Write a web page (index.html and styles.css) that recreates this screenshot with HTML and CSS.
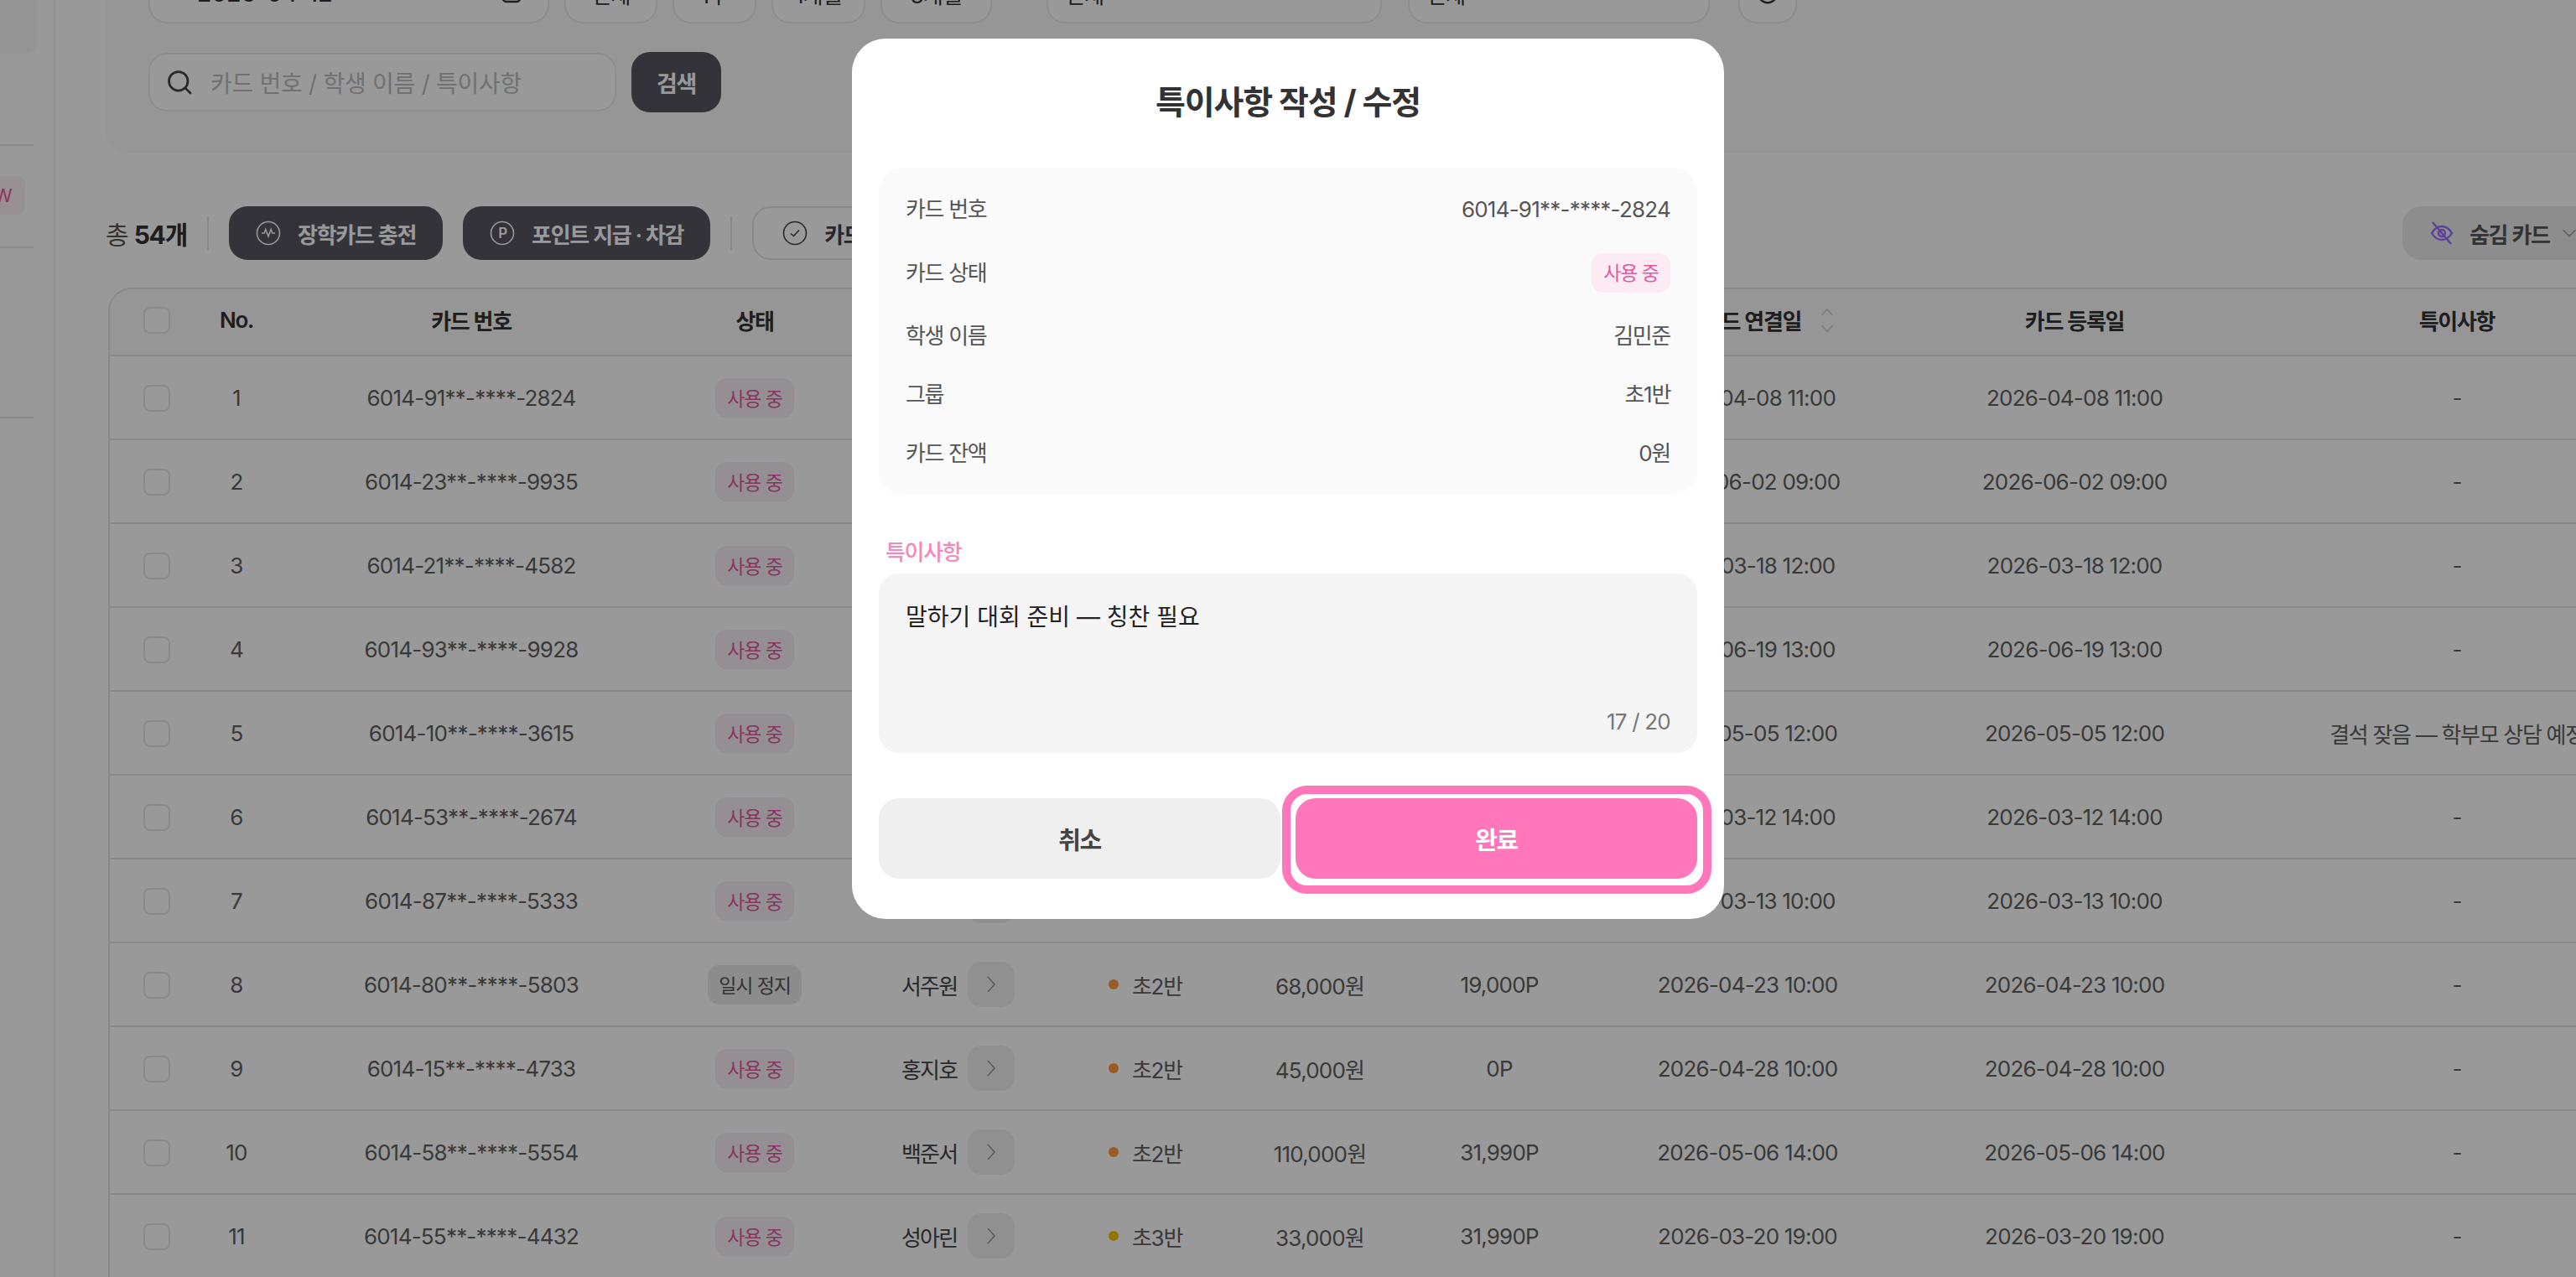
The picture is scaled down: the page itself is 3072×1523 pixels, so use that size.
FILE: index.html
```html
<!DOCTYPE html>
<html lang="ko">
<head>
<meta charset="utf-8">
<title>카드 관리</title>
<link rel="stylesheet" href="styles.css">
</head>
<body>
<div class="app">
  <aside class="sidebar">
    <div class="side-active"></div>
    <div class="side-line l1"></div>
    <div class="side-new">NEW</div>
    <div class="side-line l2"></div>
    <div class="side-line l3"></div>
  </aside>
  <main class="main">
    <section class="filters">
      <div class="filter-row">
        <div class="field date"><span>2026-04-12</span>
          <svg class="ic" viewBox="0 0 24 24"><rect x="4" y="5" width="16" height="15" rx="3"/><path d="M4 10h16M8 3v4M16 3v4"/></svg>
        </div>
        <div class="field chip w110">전체</div>
        <div class="field chip w100">1주</div>
        <div class="field chip w116">1개월</div>
        <div class="field chip w133">3개월</div>
        <div class="field select w400 push">전체</div>
        <div class="field select w360">전체</div>
        <div class="field chip w70"><svg class="ic" viewBox="0 0 24 24"><circle cx="12" cy="12" r="9"/></svg></div>
      </div>
      <div class="search-row">
        <div class="field search">
          <svg class="search-ic" viewBox="0 0 24 24"><circle cx="11" cy="11" r="9"/><path d="M17.5 17.5 23 23"/></svg>
          <span>카드 번호 / 학생 이름 / 특이사항</span>
        </div>
        <button class="btn-dark search-btn">검색</button>
      </div>
    </section>

    <section class="toolbar">
      <div class="total">총 <b>54개</b></div>
      <i class="vline"></i>
      <button class="btn-dark action"><svg class="ic-lg" viewBox="0 0 30 30"><circle cx="15" cy="15" r="13.5"/><path d="M7 15h3.200l1.600-4.500 3.200 8.500 3.200-8.500 1.600 4.500h3.200"/></svg>장학카드 충전</button>
      <button class="btn-dark action"><svg class="ic-lg" viewBox="0 0 30 30"><circle cx="15" cy="15" r="13.5"/><text x="15" y="21" text-anchor="middle" class="ic-text">P</text></svg>포인트 지급 · 차감</button>
      <i class="vline"></i>
      <button class="btn-line"><svg class="ic-lg" viewBox="0 0 30 30"><circle cx="15" cy="15" r="13.5"/><path d="m10 15.500 3.500 3 6.500-7"/></svg>카드 일시 정지</button>
      <button class="btn-hidden"><svg class="eye" viewBox="0 0 30 30"><path d="M3 15c3-5 7.500-8 12-8s9 3 12 8c-3 5-7.500 8-12 8s-9-3-12-8Z"/><circle cx="15" cy="15" r="4"/><path d="M4 2l22 26"/></svg>숨김 카드<svg class="chev" viewBox="0 0 24 24"><path d="m4 8 8 8 8-8"/></svg></button>
    </section>

    <div class="table-wrap">
      <table class="cards">
        <colgroup>
          <col class="c-check"><col class="c-no"><col class="c-card"><col class="c-status"><col class="c-name"><col class="c-group"><col class="c-bal"><col class="c-pt"><col class="c-link"><col class="c-reg"><col class="c-note">
        </colgroup>
        <thead>
          <tr>
            <th><span class="check"></span></th><th>No.</th><th>카드 번호</th><th>상태</th><th>학생 이름</th><th>그룹</th><th>카드 잔액</th><th>포인트</th>
            <th><span class="sort-wrap">카드 연결일<svg class="sort" viewBox="0 0 20 36"><path d="m3 11 7-8 7 8M3 25l7 8 7-8"/></svg></span></th>
            <th>카드 등록일</th><th>특이사항</th>
          </tr>
        </thead>
        <tbody>
          <tr><td><span class="check"></span></td><td>1</td><td>6014-91**-****-2824</td><td><span class="badge on">사용 중</span></td><td><div class="name">김민준<span class="go"><svg viewBox="0 0 12 24"><path d="m2 3 8 9-8 9"/></svg></span></div></td><td><div class="grp"><i class="dot orange"></i>초1반</div></td><td>0원</td><td>0P</td><td>2026-04-08 11:00</td><td>2026-04-08 11:00</td><td class="mute">-</td></tr>
          <tr><td><span class="check"></span></td><td>2</td><td>6014-23**-****-9935</td><td><span class="badge on">사용 중</span></td><td><div class="name">이서연<span class="go"><svg viewBox="0 0 12 24"><path d="m2 3 8 9-8 9"/></svg></span></div></td><td><div class="grp"><i class="dot orange"></i>초1반</div></td><td>25,000원</td><td>0P</td><td>2026-06-02 09:00</td><td>2026-06-02 09:00</td><td class="mute">-</td></tr>
          <tr><td><span class="check"></span></td><td>3</td><td>6014-21**-****-4582</td><td><span class="badge on">사용 중</span></td><td><div class="name">박지우<span class="go"><svg viewBox="0 0 12 24"><path d="m2 3 8 9-8 9"/></svg></span></div></td><td><div class="grp"><i class="dot orange"></i>초1반</div></td><td>50,000원</td><td>1,000P</td><td>2026-03-18 12:00</td><td>2026-03-18 12:00</td><td class="mute">-</td></tr>
          <tr><td><span class="check"></span></td><td>4</td><td>6014-93**-****-9928</td><td><span class="badge on">사용 중</span></td><td><div class="name">최하윤<span class="go"><svg viewBox="0 0 12 24"><path d="m2 3 8 9-8 9"/></svg></span></div></td><td><div class="grp"><i class="dot orange"></i>초1반</div></td><td>12,000원</td><td>0P</td><td>2026-06-19 13:00</td><td>2026-06-19 13:00</td><td class="mute">-</td></tr>
          <tr><td><span class="check"></span></td><td>5</td><td>6014-10**-****-3615</td><td><span class="badge on">사용 중</span></td><td><div class="name">정도윤<span class="go"><svg viewBox="0 0 12 24"><path d="m2 3 8 9-8 9"/></svg></span></div></td><td><div class="grp"><i class="dot orange"></i>초1반</div></td><td>30,000원</td><td>500P</td><td>2026-05-05 12:00</td><td>2026-05-05 12:00</td><td class="note">결석 잦음 — 학부모 상담 예정</td></tr>
          <tr><td><span class="check"></span></td><td>6</td><td>6014-53**-****-2674</td><td><span class="badge on">사용 중</span></td><td><div class="name">강시우<span class="go"><svg viewBox="0 0 12 24"><path d="m2 3 8 9-8 9"/></svg></span></div></td><td><div class="grp"><i class="dot orange"></i>초1반</div></td><td>8,000원</td><td>0P</td><td>2026-03-12 14:00</td><td>2026-03-12 14:00</td><td class="mute">-</td></tr>
          <tr><td><span class="check"></span></td><td>7</td><td>6014-87**-****-5333</td><td><span class="badge on">사용 중</span></td><td><div class="name">윤지아<span class="go"><svg viewBox="0 0 12 24"><path d="m2 3 8 9-8 9"/></svg></span></div></td><td><div class="grp"><i class="dot orange"></i>초2반</div></td><td>40,000원</td><td>0P</td><td>2026-03-13 10:00</td><td>2026-03-13 10:00</td><td class="mute">-</td></tr>
          <tr><td><span class="check"></span></td><td>8</td><td>6014-80**-****-5803</td><td><span class="badge off">일시 정지</span></td><td><div class="name">서주원<span class="go"><svg viewBox="0 0 12 24"><path d="m2 3 8 9-8 9"/></svg></span></div></td><td><div class="grp"><i class="dot orange"></i>초2반</div></td><td>68,000원</td><td>19,000P</td><td>2026-04-23 10:00</td><td>2026-04-23 10:00</td><td class="mute">-</td></tr>
          <tr><td><span class="check"></span></td><td>9</td><td>6014-15**-****-4733</td><td><span class="badge on">사용 중</span></td><td><div class="name">홍지호<span class="go"><svg viewBox="0 0 12 24"><path d="m2 3 8 9-8 9"/></svg></span></div></td><td><div class="grp"><i class="dot orange"></i>초2반</div></td><td>45,000원</td><td>0P</td><td>2026-04-28 10:00</td><td>2026-04-28 10:00</td><td class="mute">-</td></tr>
          <tr><td><span class="check"></span></td><td>10</td><td>6014-58**-****-5554</td><td><span class="badge on">사용 중</span></td><td><div class="name">백준서<span class="go"><svg viewBox="0 0 12 24"><path d="m2 3 8 9-8 9"/></svg></span></div></td><td><div class="grp"><i class="dot orange"></i>초2반</div></td><td>110,000원</td><td>31,990P</td><td>2026-05-06 14:00</td><td>2026-05-06 14:00</td><td class="mute">-</td></tr>
          <tr><td><span class="check"></span></td><td>11</td><td>6014-55**-****-4432</td><td><span class="badge on">사용 중</span></td><td><div class="name">성아린<span class="go"><svg viewBox="0 0 12 24"><path d="m2 3 8 9-8 9"/></svg></span></div></td><td><div class="grp"><i class="dot yellow"></i>초3반</div></td><td>33,000원</td><td>31,990P</td><td>2026-03-20 19:00</td><td>2026-03-20 19:00</td><td class="mute">-</td></tr>
        </tbody>
      </table>
    </div>
  </main>
</div>

<div class="overlay">
  <div class="modal">
    <h2 class="modal-title">특이사항 작성 / 수정</h2>
    <div class="info">
      <div class="info-row"><span class="lbl">카드 번호</span><span>6014-91**-****-2824</span></div>
      <div class="info-row"><span class="lbl">카드 상태</span><span class="badge on">사용 중</span></div>
      <div class="info-row"><span class="lbl">학생 이름</span><span class="lbl">김민준</span></div>
      <div class="info-row"><span class="lbl">그룹</span><span class="lbl">초1반</span></div>
      <div class="info-row"><span class="lbl">카드 잔액</span><span class="lbl">0원</span></div>
    </div>
    <div class="note-label">특이사항</div>
    <div class="note-box">
      <div class="note-text">말하기 대회 준비 — 칭찬 필요</div>
      <div class="note-count">17 / 20</div>
    </div>
    <div class="modal-actions">
      <button class="m-btn cancel">취소</button>
      <button class="m-btn done">완료</button>
    </div>
  </div>
</div>
</body>
</html>
```
FILE: styles.css
```css
* { box-sizing: border-box; }
html, body { margin: 0; height: 100%; overflow: hidden; background: #fff; }
body {
  font-family: Inter, "Noto Sans CJK KR", "Noto Sans", sans-serif;
  color: #555;
  font-size: 26px;
  letter-spacing: -0.03em;
}
button { font: inherit; letter-spacing: inherit; border: 0; }

.app { display: flex; width: 3072px; height: 1523px; overflow: hidden; }

/* sidebar, scrolled mostly out of view */
.sidebar { position: relative; flex: 0 0 66px; border-right: 2px solid #f3f3f3; }
.side-active { position: absolute; left: -40px; top: 0; width: 84px; height: 64px; background: #f7f7f7; border-radius: 0 0 12px 0; }
.side-line { position: absolute; left: 0; width: 40px; height: 2px; background: #e6e6e6; }
.l1 { top: 172px; } .l2 { top: 294px; } .l3 { top: 497px; }
.side-new { position: absolute; left: -36px; top: 210px; width: 66px; height: 46px; border-radius: 10px; background: #fbf1f5; color: #f0569f; font-size: 22px; line-height: 46px; text-align: right; padding-right: 16px; }

.main { flex: 1; min-width: 0; padding-left: 59px; margin-top: -84px; }

/* filters */
.filters { width: 3100px; background: #fbfbfb; border-radius: 28px; padding: 40px 52px 49px; }
.filter-row, .search-row { display: flex; align-items: center; }
.filter-row { gap: 18px; height: 72px; }
.search-row { gap: 18px; margin-top: 34px; }
.field {
  height: 72px; border: 2px solid #ececec; border-radius: 22px; background: #fff;
  display: flex; align-items: center; justify-content: center; color: #333;
}
.date { width: 478px; justify-content: space-between; padding: 0 28px 0 56px; font-weight: 500; font-size: 28px; letter-spacing: 0; }
.w110 { width: 111px; } .w100 { width: 100px; } .w116 { width: 112px; } .w133 { width: 133px; }
.select { justify-content: flex-start; padding-left: 20px; }
.w400 { width: 400px; } .w360 { width: 360px; margin-left: 13px; } .w70 { width: 70px; margin-left: 16px; }
.push { margin-left: 47px; }
.ic { width: 30px; height: 30px; fill: none; stroke: #333; stroke-width: 2; }

.search { width: 558px; height: 70px; justify-content: flex-start; padding: 0 20px; gap: 22px; color: #bdbdbd; font-size: 28px; letter-spacing: -0.01em; }
.search-ic { width: 30px; height: 30px; fill: none; stroke: #444; stroke-width: 2.2; flex: none; }
.btn-dark { background: #55565f; color: #fff; font-weight: 600; border-radius: 22px; }
.search-btn { width: 107px; height: 72px; font-size: 27px; letter-spacing: -0.05em; }

/* toolbar */
.toolbar { width: 2980px; margin-top: 63px; height: 64px; display: flex; align-items: center; gap: 24px; }
.total { font-size: 30px; color: #555; margin-left: 1px; letter-spacing: -0.04em; }
.total b { font-weight: 700; color: #333; }
.vline { width: 2px; height: 40px; background: #e4e4e4; }
.action { height: 64px; padding: 0 32px; display: flex; align-items: center; gap: 20px; font-size: 26px; border-radius: 22px; letter-spacing: -0.05em; }
.ic-lg { width: 30px; height: 30px; fill: none; stroke: currentColor; stroke-width: 1.6; flex: none; }
.ic-text { fill: currentColor; stroke: none; font-size: 17px; font-family: Inter, sans-serif; }
.btn-line { height: 64px; padding: 0 34px; background: #fff; border: 2px solid #e4e4e4; border-radius: 22px; display: flex; align-items: center; gap: 20px; color: #444; font-weight: 600; letter-spacing: -0.05em; }
.btn-hidden { margin-left: auto; height: 64px; width: 240px; flex: none; padding: 0 0 0 32px; background: #ebebeb; border-radius: 22px; display: flex; align-items: center; gap: 18px; color: #555; font-weight: 600; letter-spacing: -0.05em; }
.eye { width: 30px; height: 30px; fill: none; stroke: #9b6bff; stroke-width: 2.4; flex: none; }
.chev { width: 22px; height: 22px; fill: none; stroke: #aaa; stroke-width: 2; flex: none; margin-left: -6px; }

/* table */
.table-wrap { width: 2981px; margin-top: 33px; margin-left: 4px; border: 2px solid #e4e4e4; border-bottom: 0; border-right: 0; border-radius: 28px 0 0 0; overflow: hidden; }
.cards { border-collapse: separate; border-spacing: 0; table-layout: fixed; width: 3041px; font-size: 26px; }
.c-check { width: 112px; } .c-no { width: 78px; } .c-card { width: 482px; } .c-status { width: 194px; }
.c-name { width: 293px; } .c-group { width: 190px; } .c-bal { width: 188px; } .c-pt { width: 240px; }
.c-link { width: 352px; } .c-reg { width: 428px; } .c-note { width: 484px; }
.cards th, .cards td { text-align: center; border-bottom: 2px solid #e6e6e6; padding: 0; white-space: nowrap; }
.cards th { height: 80px; padding-bottom: 5px; background: #fafafa; color: #333; font-weight: 600; letter-spacing: -0.05em; }
.cards td { height: 100px; color: #606060; }
.check { display: inline-block; width: 32px; height: 32px; vertical-align: middle; border: 2px solid #e6e6e6; border-radius: 8px; background: #fff; }
.sort-wrap { display: inline-flex; align-items: center; gap: 22px; margin-left: 50px; }
.sort { width: 18px; height: 32px; fill: none; stroke: #d0d0d0; stroke-width: 1.8; }
.badge { display: inline-flex; align-items: center; justify-content: center; height: 47px; border-radius: 14px; font-size: 23px; letter-spacing: -0.05em; }
.badge.on { width: 94px; background: #fdebf4; color: #e4589f; }
.cards .badge.on { background: #f7eef3; }
.badge.off { width: 112px; background: #e9e9e9; color: #555; }
.name { display: flex; align-items: center; gap: 13px; padding-left: 78px; color: #444; letter-spacing: -0.07em; }
.go { width: 56px; height: 54px; border-radius: 16px; background: #f1f1f1; display: flex; align-items: center; justify-content: center; }
.go svg { width: 12px; height: 24px; fill: none; stroke: #999; stroke-width: 1.6; }
.grp { display: flex; align-items: center; gap: 16px; padding-left: 32px; letter-spacing: -0.05em; }
.dot { width: 12px; height: 12px; border-radius: 50%; }
.orange { background: #ff9b3d; }
.yellow { background: #f5c400; }
.mute { color: #888; }
.cards td.note { letter-spacing: -0.05em; }

/* overlay + modal */
.overlay { position: fixed; inset: 0; background: rgba(0,0,0,.4); display: flex; justify-content: center; align-items: flex-start; padding-top: 46px; }
.modal { width: 1040px; height: 1050px; background: #fff; border-radius: 40px; padding: 48px 32px; }
.modal-title { margin: 0; height: 56px; text-align: center; font-size: 39px; line-height: 56px; font-weight: 700; color: #333; letter-spacing: -0.03em; }
.info { margin-top: 50px; background: #fafafa; border-radius: 28px; padding: 32px 32px 30px; display: flex; flex-direction: column; gap: 34px; }
.info-row { display: flex; justify-content: space-between; align-items: center; min-height: 36px; line-height: 36px; color: #555; }
.lbl { letter-spacing: -0.05em; }
.note-label { margin-top: 53px; height: 34px; line-height: 34px; padding-left: 8px; color: #f089bd; font-weight: 500; letter-spacing: -0.05em; }
.note-box { margin-top: 8px; height: 214px; background: #f5f5f5; border-radius: 24px; padding: 33px 32px 20px; display: flex; flex-direction: column; justify-content: space-between; }
.note-text { font-size: 28px; line-height: 38px; color: #222; letter-spacing: 0; }
.note-count { align-self: flex-end; color: #777; line-height: 34px; }
.modal-actions { margin-top: 54px; display: flex; gap: 18px; }
.m-btn { flex: 1; height: 96px; border-radius: 24px; font-size: 29px; font-weight: 700; letter-spacing: -0.05em; }
.cancel { background: #efeff0; color: #444; }
.done { position: relative; background: #ff76ba; color: #fff; }
.done::after { content: ""; position: absolute; inset: -15px -17px -18px -16px; border: 10px solid #ff76ba; border-radius: 30px; }
```
